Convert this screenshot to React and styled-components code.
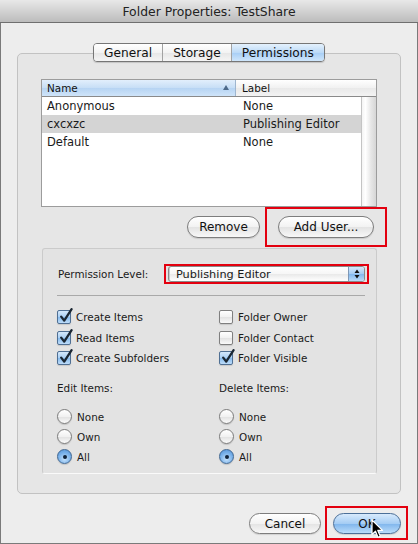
import React from 'react'
import styled, { createGlobalStyle, css } from 'styled-components'

const GlobalStyle = createGlobalStyle`
  html, body { margin: 0; padding: 0; background: #ededed; }
  body { font-family: "DejaVu Sans", "Liberation Sans", sans-serif; color: #1a1a1a; }
  * { box-sizing: border-box; }
`

const Window = styled.div`
  position: relative;
  width: 418px;
  height: 544px;
  border: 1px solid #7a7a7a;
  border-top: none;
  background: #ededed;
  display: flex;
  flex-direction: column;
`

const TitleBar = styled.div`
  height: 23px;
  margin: 0 -1px;
  border-bottom: 1px solid #6f6f6f;
  background: linear-gradient(#e8e8e8, #d2d2d2 50%, #bcbcbc);
  display: flex;
  align-items: center;
  justify-content: center;
  font-size: 12.4px;
  color: #222;
`

const Content = styled.div`
  padding: 20px 16px 0;
  display: flex;
  flex-direction: column;
`

const Tabs = styled.div`
  position: relative;
  z-index: 1;
  align-self: center;
  display: flex;
  height: 19px;
  border: 1px solid #767676;
  border-radius: 4px;
  overflow: hidden;
  box-shadow: 0 1px 1px rgba(0, 0, 0, 0.15);
`

const Tab = styled.div`
  padding: 0 10px;
  display: flex;
  align-items: center;
  font-size: 12.2px;
  color: #111;
  background: linear-gradient(#ffffff, #f3f3f3 50%, #e6e6e6 51%, #f5f5f5);
  & + & { border-left: 1px solid #a2a2a2; }
  ${({ $active }) => $active && css`
    background: linear-gradient(#e4f1fd, #bcdaf7 50%, #a6cdf5 51%, #cfe6fb);
  `}
`

const Panel = styled.div`
  margin-top: -9px;
  height: 441px;
  border: 1px solid #c2c2c2;
  border-radius: 5px;
  background: #e6e6e6;
  padding: 25px 23px 0 23px;
  display: flex;
  flex-direction: column;
`

const Table = styled.div`
  height: 128px;
  border: 1px solid #9c9c9c;
  background: #fff;
  display: flex;
  flex-direction: column;
`

const HeaderRow = styled.div`
  display: grid;
  grid-template-columns: 194px 1fr;
  height: 17px;
  border-bottom: 1px solid #8a8a8a;
`

const HeaderCell = styled.div`
  position: relative;
  display: flex;
  align-items: center;
  padding-left: ${({ $pad }) => $pad}px;
  font-size: 10.4px;
  color: #111;
  background: linear-gradient(#ffffff, #f1f1f1 50%, #e9e9e9 51%, #f3f3f3);
  ${({ $sorted }) => $sorted && css`
    border-right: 1px solid #9fb6cf;
    background: linear-gradient(#e2effc, #c6def6 50%, #b6d4f3 51%, #cfe4f9);
  `}
`

const SortArrow = styled.span`
  position: absolute;
  right: 6px;
  top: 5px;
  width: 0;
  height: 0;
  border-left: 3.5px solid transparent;
  border-right: 3.5px solid transparent;
  border-bottom: 5px solid #4d6a8a;
`

const TableBody = styled.div`
  flex: 1;
  display: flex;
`

const Rows = styled.div`
  flex: 1;
`

const Row = styled.div`
  display: grid;
  grid-template-columns: 194px 1fr;
  height: 18px;
  align-items: center;
  font-size: 11.5px;
  background: ${({ $selected }) => ($selected ? '#d4d4d4' : 'transparent')};
  & > span:first-child { padding-left: 5px; }
  & > span:last-child { padding-left: 7px; }
`

const Scrollbar = styled.div`
  width: 15px;
  border-left: 1px solid #c4c4c4;
  background: linear-gradient(to right, #f4f4f4, #ffffff 25%, #e6e6e6 65%, #d6d6d6);
`

const ButtonRow = styled.div`
  display: flex;
  justify-content: flex-end;
  gap: 18px;
  margin-top: 9px;
  padding-right: 3px;
`

const Highlight = css`
  position: relative;
  &::after {
    content: '';
    position: absolute;
    border: 2px solid #e3000f;
    inset: ${({ $inset }) => $inset};
    pointer-events: none;
  }
`

const PushButton = styled.div`
  height: ${({ $h }) => $h || 22}px;
  width: ${({ $w }) => $w}px;
  border: 1px solid #7d7d7d;
  border-radius: 12px;
  display: flex;
  align-items: center;
  justify-content: center;
  font-size: 12px;
  color: #111;
  background: linear-gradient(#ffffff, #f2f2f2 50%, #e3e3e3 51%, #f8f8f8);
  box-shadow: 0 1px 1px rgba(0, 0, 0, 0.12);
  ${({ $default }) => $default && css`
    border-color: #4b6f98;
    background: linear-gradient(#d8eafc, #a5cdf4 50%, #7fb5ec 51%, #b9dcfa);
  `}
  ${({ $inset }) => $inset && Highlight}
`

const GroupBox = styled.div`
  margin-top: 10px;
  margin-left: 1px;
  height: 226px;
  border: 1px solid #cbcbcb;
  border-bottom-color: #fafafa;
  border-radius: 3px;
  background: #e3e3e3;
  padding: 16px 11px 0 15px;
  display: flex;
  flex-direction: column;
`

const LevelRow = styled.div`
  display: flex;
  align-items: center;
  height: 18px;
`

const SmallLabel = styled.span`
  font-size: 10.4px;
  color: #1a1a1a;
  width: ${({ $w }) => ($w ? `${$w}px` : 'auto')};
  flex-shrink: 0;
`

const Popup = styled.div`
  ${Highlight}
  flex: 1;
  height: 16px;
  border: 1px solid #8a8a8a;
  border-radius: 3px;
  background: linear-gradient(#ffffff, #f6f6f6 50%, #e9e9e9 51%, #ffffff);
  display: flex;
  align-items: center;
  font-size: 11.3px;
  padding-left: 7px;
  box-shadow: inset 2px 0 0 -1px #c8c8c8;
`

const PopupText = styled.span`
  flex: 1;
`

const Stepper = styled.div`
  width: 16px;
  height: 100%;
  border-left: 1px solid #7e98b6;
  border-radius: 0 2px 2px 0;
  background: linear-gradient(#d6e9fc, #a4ccf3 50%, #82b8ee 51%, #bcdcf9);
  display: flex;
  align-items: center;
  justify-content: center;
`

const Separator = styled.div`
  margin: 12px 0 0 -1px;
  width: 308px;
  height: 1px;
  background: #a9a9a9;
`

const CheckGrid = styled.div`
  margin-top: 11px;
  display: grid;
  grid-template-columns: 162px 1fr;
  grid-auto-rows: 20.5px;
  margin-left: -1px;
`

const OptionItem = styled.div`
  display: flex;
  align-items: center;
  gap: 5px;
  font-size: 10.4px;
`

const Box = styled.span`
  position: relative;
  width: 14px;
  height: 14px;
  border: 1px solid #7f7f7f;
  border-radius: 2px;
  background: linear-gradient(#ffffff, #f1f1f1 50%, #e2e2e2 51%, #fafafa);
  box-shadow: 0 1px 1px rgba(0, 0, 0, 0.12);
  ${({ $on }) => $on && css`
    border-color: #4f6f93;
    background: linear-gradient(#d4e8fb, #a9cff4 50%, #86bbee 51%, #bddcf9);
  `}
  & svg { position: absolute; left: 1px; top: -3px; }
`

const SectionGrid = styled.div`
  margin-top: 12px;
  display: grid;
  grid-template-columns: 162px 1fr;
  margin-left: -1px;
`

const RadioGroup = styled.div`
  display: flex;
  flex-direction: column;
  & > ${SmallLabel} { height: 14px; line-height: 14px; margin-bottom: 12px; }
`

const RadioItem = styled(OptionItem)`
  height: 20px;
  gap: 5px;
`

const Radio = styled.span`
  width: 15px;
  height: 15px;
  border-radius: 50%;
  border: 1px solid #7c7c7c;
  background: linear-gradient(#ffffff, #f1f1f1 50%, #e0e0e0 51%, #fbfbfb);
  box-shadow: 0 1px 1px rgba(0, 0, 0, 0.15);
  display: flex;
  align-items: center;
  justify-content: center;
  ${({ $on }) => $on && css`
    border-color: #3f6792;
    background: radial-gradient(circle at 50% 70%, #c6e2fb, #79b1ea 55%, #4f8fd6);
    &::after {
      content: '';
      width: 4px;
      height: 4px;
      border-radius: 50%;
      background: #10233a;
    }
  `}
`

const Footer = styled.div`
  display: flex;
  justify-content: flex-end;
  gap: 12px;
  margin-top: 19px;
`

const Cursor = styled.svg`
  position: absolute;
  left: 37px;
  top: 5px;
`

const Check = () => (
  <svg width="14" height="15" viewBox="0 0 14 15">
    <path d="M2.2 8.6 L5.2 12.6 L12.6 1.2" fill="none" stroke="#1b2733" strokeWidth="2.3" strokeLinecap="round" strokeLinejoin="round" />
  </svg>
)

const CheckItem = ({ on, children }) => (
  <OptionItem>
    <Box $on={on}>{on && <Check />}</Box>
    {children}
  </OptionItem>
)

const RadioOpts = ({ title }) => (
  <RadioGroup>
    <SmallLabel>{title}</SmallLabel>
    <RadioItem><Radio />None</RadioItem>
    <RadioItem><Radio />Own</RadioItem>
    <RadioItem><Radio $on />All</RadioItem>
  </RadioGroup>
)

export default function App() {
  const users = [
    { name: 'Anonymous', label: 'None' },
    { name: 'cxcxzc', label: 'Publishing Editor', selected: true },
    { name: 'Default', label: 'None' },
  ]

  return (
    <>
      <GlobalStyle />
      <Window>
        <TitleBar>Folder Properties: TestShare</TitleBar>
        <Content>
          <Tabs>
            <Tab>General</Tab>
            <Tab>Storage</Tab>
            <Tab $active>Permissions</Tab>
          </Tabs>
          <Panel>
            <Table>
              <HeaderRow>
                <HeaderCell $sorted $pad={5}>Name<SortArrow /></HeaderCell>
                <HeaderCell $pad={6}>Label</HeaderCell>
              </HeaderRow>
              <TableBody>
                <Rows>
                  {users.map((u) => (
                    <Row key={u.name} $selected={u.selected}>
                      <span>{u.name}</span>
                      <span>{u.label}</span>
                    </Row>
                  ))}
                </Rows>
                <Scrollbar />
              </TableBody>
            </Table>
            <ButtonRow>
              <PushButton $w={73}>Remove</PushButton>
              <PushButton $w={96} $inset="-10px -14px -10px -14px">Add User...</PushButton>
            </ButtonRow>
            <GroupBox>
              <LevelRow>
                <SmallLabel $w={110}>Permission Level:</SmallLabel>
                <Popup $inset="-3px -5px -3px -5px">
                  <PopupText>Publishing Editor</PopupText>
                  <Stepper>
                    <svg width="6" height="10" viewBox="0 0 6 10">
                      <path d="M3 0.5 L5.5 4 L0.5 4 Z M3 9.5 L5.5 6 L0.5 6 Z" fill="#111" />
                    </svg>
                  </Stepper>
                </Popup>
              </LevelRow>
              <Separator />
              <CheckGrid>
                <CheckItem on>Create Items</CheckItem>
                <CheckItem>Folder Owner</CheckItem>
                <CheckItem on>Read Items</CheckItem>
                <CheckItem>Folder Contact</CheckItem>
                <CheckItem on>Create Subfolders</CheckItem>
                <CheckItem on>Folder Visible</CheckItem>
              </CheckGrid>
              <SectionGrid>
                <RadioOpts title="Edit Items:" />
                <RadioOpts title="Delete Items:" />
              </SectionGrid>
            </GroupBox>
          </Panel>
          <Footer>
            <PushButton $w={72} $h={21}>Cancel</PushButton>
            <PushButton $w={68} $h={21} $default $inset="-8px -8px -7px -9px">
              OK
              <Cursor width="13" height="20" viewBox="0 0 13 20">
                <path d="M1 1 L1 15.5 L4.5 12.2 L7 18.2 L9.3 17.2 L6.8 11.4 L11.5 11.4 Z" fill="#000" stroke="#fff" strokeWidth="1.2" strokeLinejoin="round" />
              </Cursor>
            </PushButton>
          </Footer>
        </Content>
      </Window>
    </>
  )
}
